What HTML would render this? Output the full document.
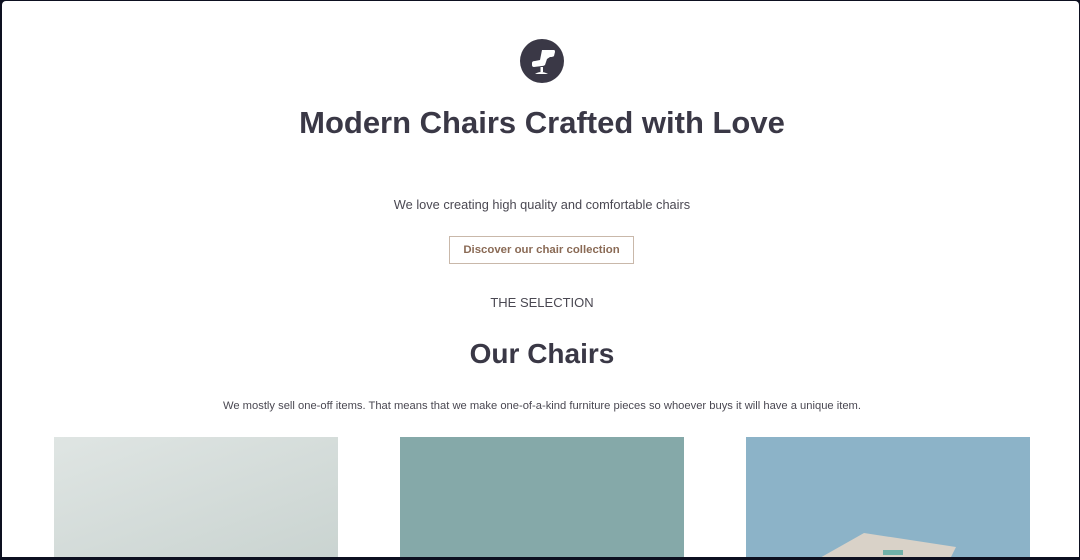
<!DOCTYPE html>
<html><head><meta charset="utf-8"><style>
html,body{margin:0;padding:0;width:1080px;height:560px;overflow:hidden;background:#0d1020;}
.page{position:absolute;left:2px;top:1px;width:1077px;height:556px;background:#fff;border-radius:4px 4px 0 0;overflow:hidden;font-family:"Liberation Sans",sans-serif;color:#3a3846;}
.c{position:absolute;left:0;width:1080px;text-align:center;}
h1{margin:0;font-size:31px;font-weight:bold;}
.btn{position:absolute;left:447px;top:235px;width:185px;height:28px;border:1px solid #c9b8aa;box-sizing:border-box;text-align:center;line-height:26px;font-size:11.4px;font-weight:bold;color:#8a6a55;}
.img{position:absolute;top:436px;width:284px;height:130px;overflow:hidden;}
</style></head><body><div class="page">
<svg style="position:absolute;left:518px;top:38px" width="44" height="44" viewBox="0 0 44 44">
<circle cx="22" cy="22" r="22" fill="#3a3846"/>
<path d="M22 11 L34 11 Q35 11 35 13 L34 17 Q33 18 30 18 L27 20 L25 26 Q24 27 22 27 L14 28 Q12 28 12 26 L12 24 Q12 22 15 22 L20 21 Z" fill="#fff"/>
<rect x="20.5" y="28" width="2.5" height="5" fill="#fff"/>
<path d="M15 35 Q21 31 28 35 Z" fill="#fff"/>
</svg>
<div class="c" style="top:104px"><h1>Modern Chairs Crafted with Love</h1></div>
<div class="c" style="top:196px;font-size:12.8px;color:#4a4852">We love creating high quality and comfortable chairs</div>
<div class="btn">Discover our chair collection</div>
<div class="c" style="top:294px;font-size:13px;color:#4a4852">THE SELECTION</div>
<div class="c" style="top:337px"><h1 style="font-size:28px">Our Chairs</h1></div>
<div class="c" style="top:399px;font-size:11.2px;color:#4a4852">We mostly sell one-off items. That means that we make one-of-a-kind furniture pieces so whoever buys it will have a unique item.</div>
<div class="img" style="left:52px;background:linear-gradient(160deg,#dfe5e3,#c9d3d0)"></div>
<div class="img" style="left:398px;background:#85a9a9"></div>
<div class="img" style="left:744px;background:#8cb3c8">
<svg width="284" height="130" style="position:absolute;left:0;top:0"><polygon points="72,122 118,96 210,110 200,130 78,130" fill="#d9d2c8"/><rect x="137" y="113" width="20" height="5" fill="#6fb0a8"/></svg>
</div>
</div></body></html>
